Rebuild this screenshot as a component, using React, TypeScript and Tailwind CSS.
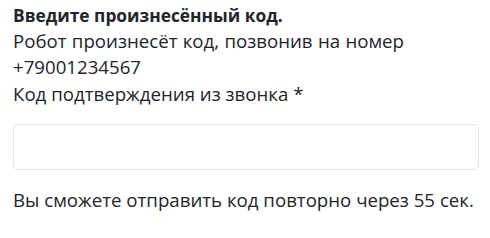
export default function App() {
  return (
    <div
      className="w-[490px] h-[238px] bg-white pl-[13px] pt-[2px] text-[#212529] text-[18.67px] leading-[26.4px]"
      style={{ fontFamily: '"Open Sans", "Noto Sans", sans-serif' }}
    >
      <div className="font-bold text-[17.33px] leading-[26px]">Введите произнесённый код.</div>
      <p className="w-[391px] text-justify">Робот произнесёт код, позвонив на номер +79001234567</p>
      <label className="block">Код подтверждения из звонка *</label>
      <input className="mt-[17px] block w-[466px] h-[46px] border border-[#e4e4e4] rounded-[5px] outline-none" />
      <p className="mt-[17px]">Вы сможете отправить код повторно через 55 сек.</p>
    </div>
  );
}
